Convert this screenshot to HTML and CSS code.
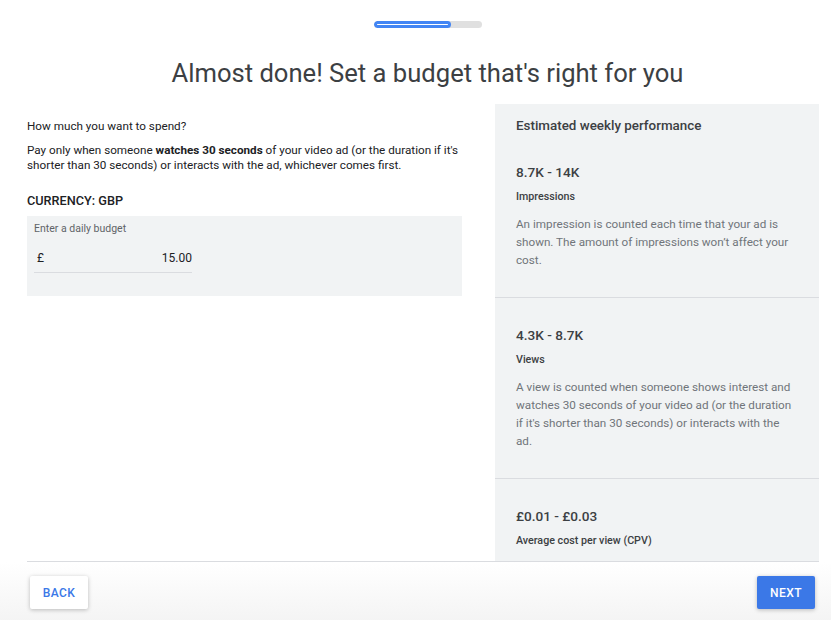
FILE: index.html
```html
<!DOCTYPE html>
<html lang="en">
<head>
    <meta charset="UTF-8">
    <meta name="viewport" content="width=device-width, initial-scale=1.0">
    <title>Set a budget</title>
    <link rel="stylesheet" href="styles.css">
</head>
<body>
    <header class="top">
        <div class="progress">
            <div class="progress-fill"></div>
        </div>
        <h1>Almost done! Set a budget that's right for you</h1>
    </header>

    <div class="main">
        <div class="budget">
            <p class="question">How much you want to spend?</p>
            <p class="note">Pay only when someone <b>watches 30 seconds</b> of your video ad (or the duration if it's shorter than 30 seconds) or interacts with the ad, whichever comes first.</p>
            <h2 class="currency">CURRENCY: GBP</h2>
            <div class="budget-box">
                <div class="budget-label">Enter a daily budget</div>
                <div class="budget-input">
                    <span>£</span>
                    <span>15.00</span>
                </div>
            </div>
        </div>

        <div class="estimate">
            <div class="stat">
                <h3 class="estimate-title">Estimated weekly performance</h3>
                <div class="stat-value">8.7K - 14K</div>
                <div class="stat-label">Impressions</div>
                <p class="stat-desc">An impression is counted each time that your ad is shown. The amount of impressions won’t affect your cost.</p>
            </div>
            <div class="stat">
                <div class="stat-value">4.3K - 8.7K</div>
                <div class="stat-label">Views</div>
                <p class="stat-desc">A view is counted when someone shows interest and watches 30 seconds of your video ad (or the duration if it's shorter than 30 seconds) or interacts with the ad.</p>
            </div>
            <div class="stat">
                <div class="stat-value">£0.01 - £0.03</div>
                <div class="stat-label">Average cost per view (CPV)</div>
            </div>
        </div>
    </div>

    <div class="footer">
        <button class="btn btn-back">BACK</button>
        <button class="btn btn-next">NEXT</button>
    </div>
</body>
</html>
```

FILE: styles.css
```css
* {
    margin: 0;
    padding: 0;
    box-sizing: border-box;
}

body {
    font-family: Roboto, "Liberation Sans", Arial, sans-serif;
    color: #202124;
    background: #fff;
    width: 831px;
    height: 620px;
    overflow: hidden;
}

/* header is centred a little right of the page middle */
.top {
    padding: 21px 0 0 24px;
}

.progress {
    width: 108px;
    height: 7px;
    margin: 0 auto;
    background: #e0e0e0;
    border-radius: 4px;
    overflow: hidden;
}

.progress-fill {
    width: 77px;
    height: 7px;
    background: #fff;
    border: 3px solid #4285f4;
    border-radius: 4px;
}

h1 {
    margin-top: 29px;
    text-align: center;
    font-size: 25.6px;
    line-height: 32px;
    font-weight: 400;
    color: #3c4043;
}

.main {
    display: flex;
    gap: 33px;
    margin: 15px 12px 0 27px;
    height: 458px;
    overflow: hidden;
    border-bottom: 1px solid #dadce0;
}

/* left column */
.budget {
    width: 435px;
    padding-top: 14px;
    font-size: 11.7px;
}

.question {
    line-height: 16px;
}

.note {
    margin-top: 9px;
    line-height: 15px;
}

.note b {
    font-weight: 700;
}

.currency {
    margin-top: 20px;
    font-size: 12.7px;
    line-height: 16px;
    font-weight: 500;
}

.budget-box {
    margin-top: 7px;
    height: 80px;
    background: #f1f3f4;
    padding: 6px 7px 0;
}

.budget-label {
    font-size: 10.5px;
    line-height: 14px;
    color: #5f6368;
}

.budget-input {
    display: flex;
    justify-content: space-between;
    width: 158px;
    margin-top: 13px;
    padding: 0 0 5px 3px;
    font-size: 12px;
    line-height: 18px;
    border-bottom: 1px solid #dadce0;
}

/* right panel */
.estimate {
    width: 324px;
    background: #f1f3f4;
}

.stat {
    padding: 28px 21px 28px;
    border-bottom: 1px solid #dadce0;
}

.stat:first-child {
    padding-top: 13px;
}

.estimate-title {
    font-size: 13.4px;
    line-height: 18px;
    font-weight: 500;
    color: #3c4043;
    margin-bottom: 28px;
}

.stat-value {
    font-size: 13.6px;
    line-height: 18px;
    font-weight: 500;
    color: #3c4043;
}

.stat-label {
    margin-top: 8px;
    font-size: 10.7px;
    line-height: 16px;
    font-weight: 500;
    color: #3c4043;
}

.stat-desc {
    margin-top: 10px;
    font-size: 11.7px;
    line-height: 18px;
    color: #70757a;
}

/* footer */
.footer {
    display: flex;
    justify-content: space-between;
    height: 60px;
    padding: 14px 16px 0 30px;
    background: linear-gradient(#fff, #f4f4f4);
}

.btn {
    height: 33px;
    width: 58px;
    border: none;
    border-radius: 2px;
    font-family: Roboto, "Liberation Sans", Arial, sans-serif;
    font-size: 12px;
    font-weight: 500;
    letter-spacing: 0.4px;
    cursor: pointer;
    box-shadow: 0 1px 4px rgba(0, 0, 0, 0.25);
}

.btn-back {
    background: #fff;
    color: #3b78e7;
}

.btn-next {
    background: #3b78e7;
    color: #fff;
}
```
